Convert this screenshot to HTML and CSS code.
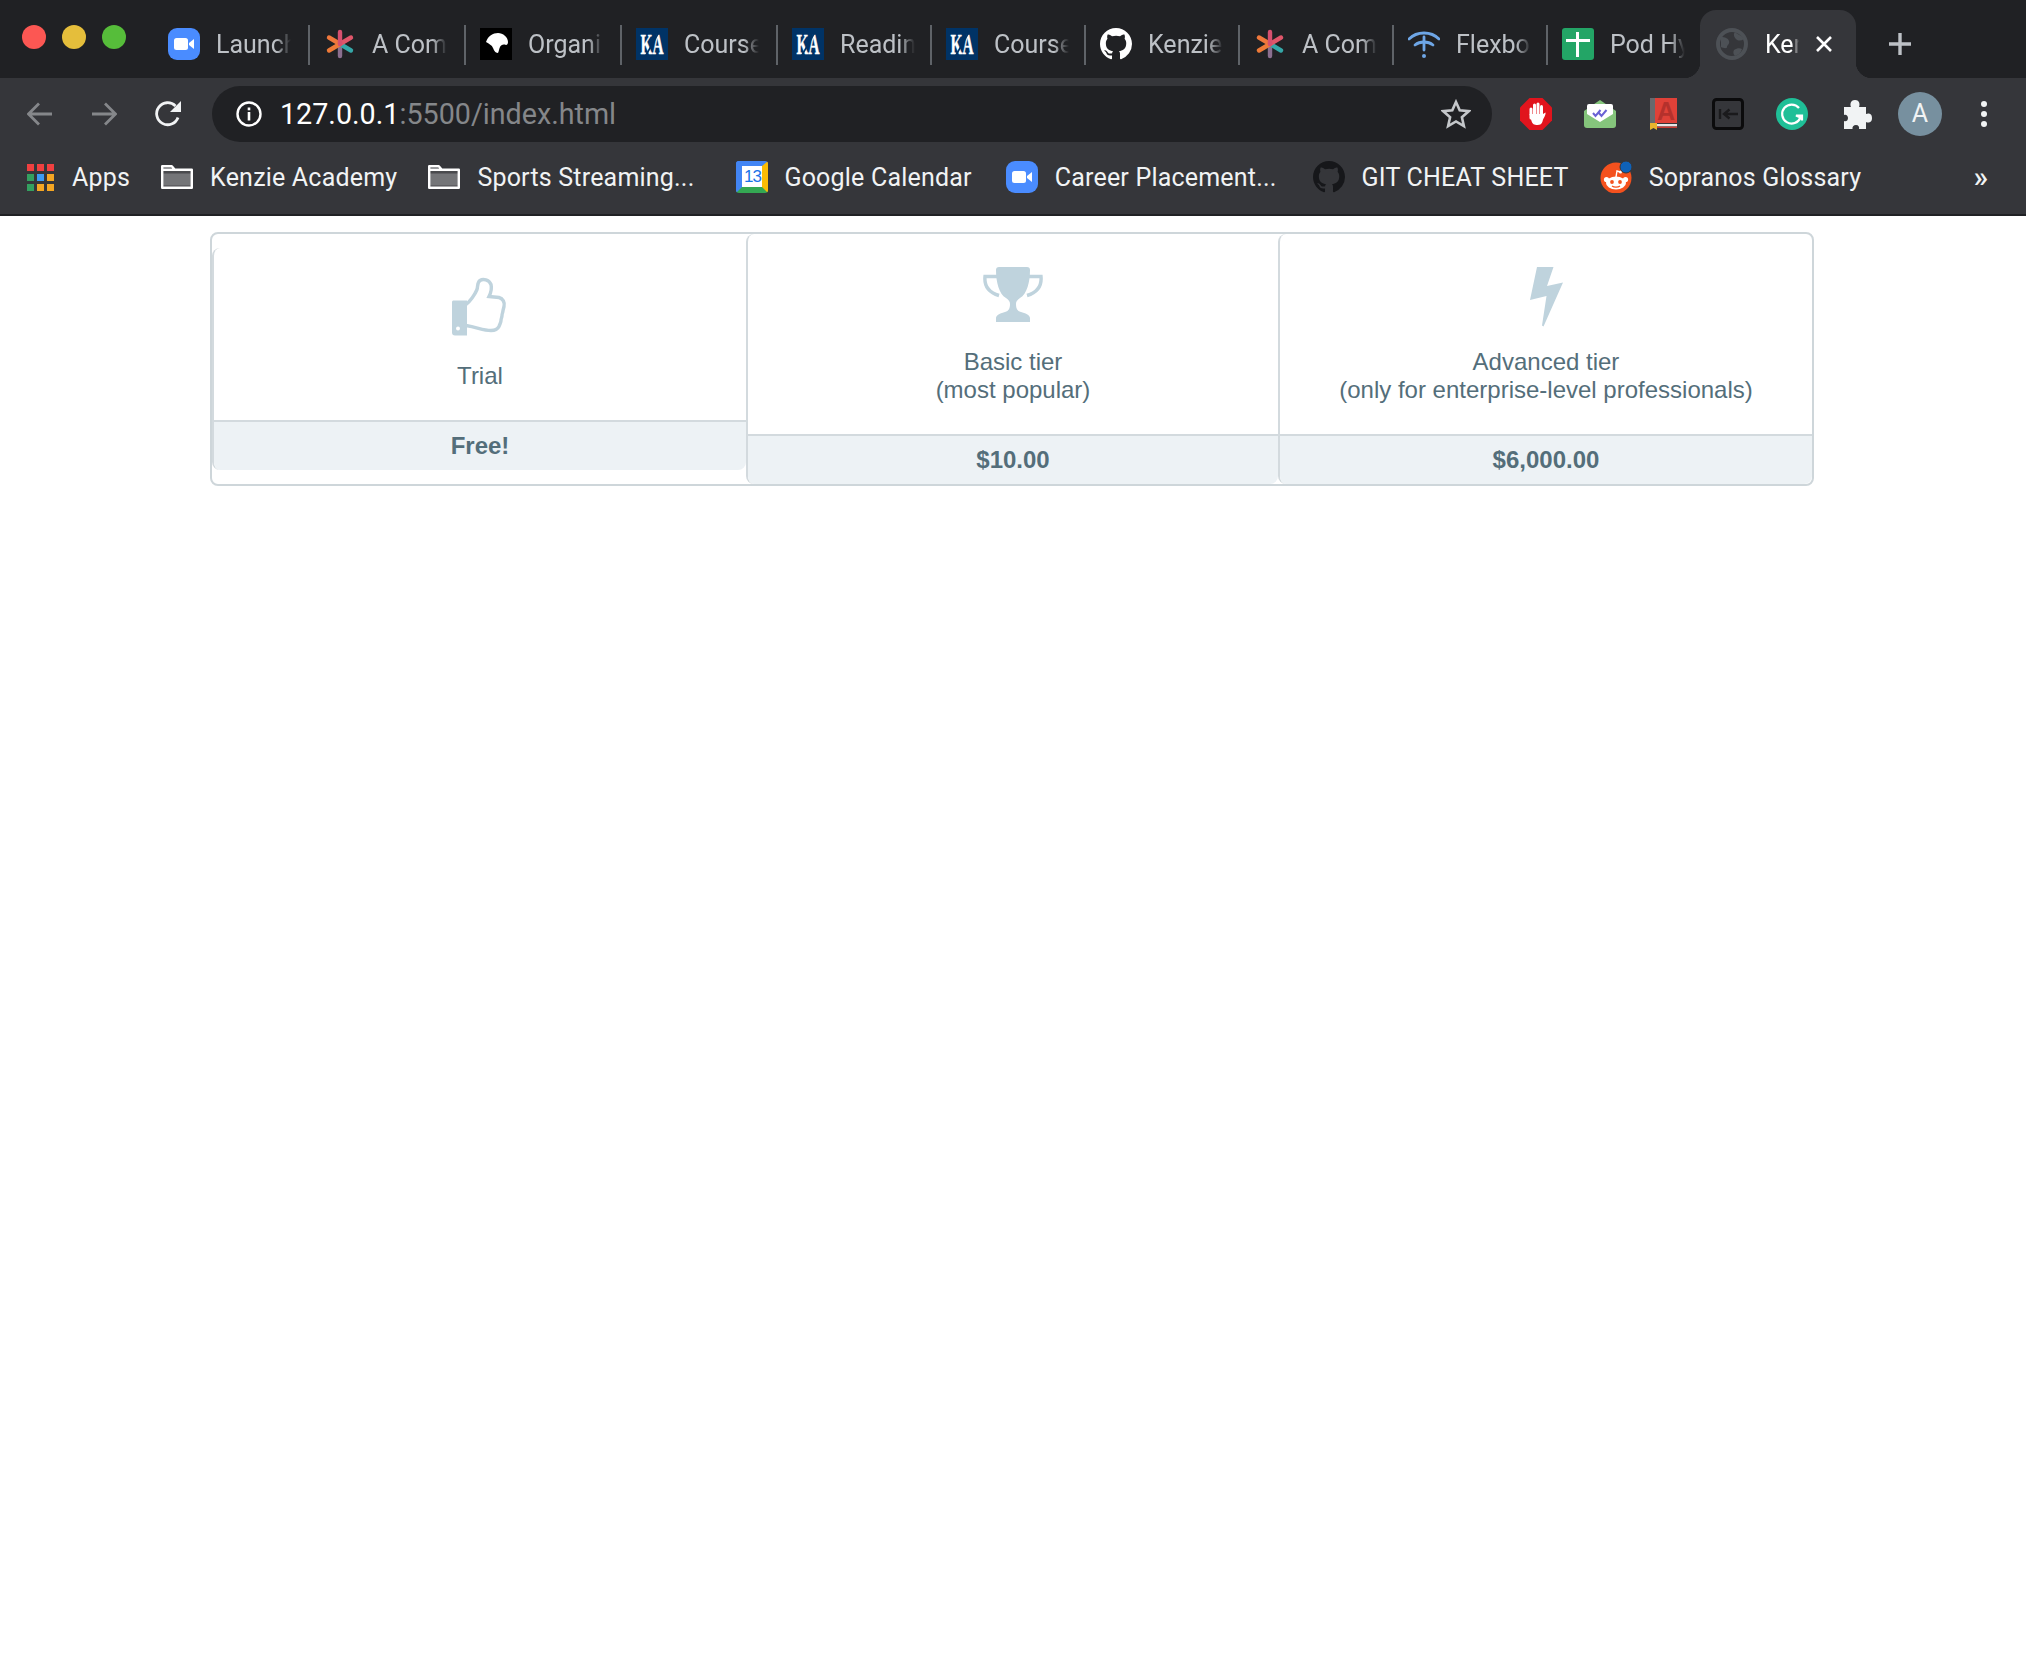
FILE: index.html
```html
<!DOCTYPE html>
<html lang="en">
<head>
    <meta charset="UTF-8">
    <title>Kenzie</title>
    <link rel="stylesheet" href="styles.css">
</head>
<body>
    <svg class="defs" width="0" height="0">
        <symbol id="octocat" viewBox="0 0 16 16">
            <path d="M8 0C3.58 0 0 3.58 0 8c0 3.54 2.29 6.53 5.47 7.59.4.07.55-.17.55-.38 0-.19-.01-.82-.01-1.49-2.01.37-2.53-.49-2.69-.94-.09-.23-.48-.94-.82-1.13-.28-.15-.68-.52-.01-.53.63-.01 1.08.58 1.23.82.72 1.21 1.87.87 2.33.66.07-.52.28-.87.51-1.07-1.78-.2-3.64-.89-3.64-3.95 0-.87.31-1.59.82-2.15-.08-.2-.36-1.02.08-2.12 0 0 .67-.21 2.2.82.64-.18 1.32-.27 2-.27.68 0 1.36.09 2 .27 1.53-1.04 2.2-.82 2.2-.82.44 1.1.16 1.92.08 2.12.51.56.82 1.27.82 2.15 0 3.07-1.87 3.75-3.65 3.95.29.25.54.73.54 1.48 0 1.07-.01 1.93-.01 2.2 0 .21.15.46.55.38A8.013 8.013 0 0016 8c0-4.42-3.58-8-8-8z"/>
        </symbol>
        <symbol id="zoom-icon" viewBox="0 0 32 32">
            <rect width="32" height="32" rx="9" fill="#4a8cff"/>
            <rect x="6" y="10" width="14" height="12" rx="2.5" fill="#fff"/>
            <path d="M21 15l5-4v10l-5-4z" fill="#fff"/>
        </symbol>
        <symbol id="star-icon" viewBox="0 0 32 32">
            <g stroke-width="4.400" stroke-linecap="round">
                <path d="M16 16v12" stroke="#8b6f8f"/>
                <path d="M16 16l11 6.500" stroke="#35a7a8"/>
                <path d="M16 16L5 22.500" stroke="#ee7a38"/>
                <path d="M16 16L5 9.500" stroke="#f0783c"/>
                <path d="M16 16l11-6.500" stroke="#e0566a"/>
                <path d="M16 16V4" stroke="#d6506f"/>
            </g>
        </symbol>
        <symbol id="folder-icon" viewBox="0 0 32 24">
            <rect x="2" y="6" width="28" height="16" fill="#4a4b4e"/>
            <rect x="2" y="8.500" width="28" height="12" fill="#747578"/>
            <path d="M1.200 22.800V1.200h9.600l3 3.600h17v18zM1.200 4.800h12.600" fill="none" stroke="#fff" stroke-width="2.400" stroke-linejoin="round"/>
        </symbol>
        <symbol id="ka-logo" viewBox="0 0 32 32">
            <rect width="32" height="32" fill="#003366"/>
            <text class="ka-text" x="16" y="26" textLength="23" lengthAdjust="spacingAndGlyphs">KA</text>
            <path d="M23 4L9 29" stroke="#003366" stroke-width="1.600"/>
        </symbol>
    </svg>

    <div class="tabstrip">
        <div class="lights">
            <span class="light light-red"></span>
            <span class="light light-yellow"></span>
            <span class="light light-green"></span>
        </div>
        <div class="tab">
            <svg class="favicon"><use href="#zoom-icon"/></svg>
            <span class="tab-title">Launch</span>
        </div>
        <div class="tab">
            <svg class="favicon"><use href="#star-icon"/></svg>
            <span class="tab-title">A Com</span>
        </div>
        <div class="tab">
            <svg class="favicon" viewBox="0 0 32 32">
                <rect width="32" height="32" fill="#000"/>
                <path d="M6 14C8 8 13 5 18 5c5 0 10 4 10 9 0 2-1 3-2 3-3-1-5 0-6 2-1 2-1 4-2 6-3 0-4-3-5-5-1-3-4-4-7-6z" fill="#fff"/>
            </svg>
            <span class="tab-title">Organi</span>
        </div>
        <div class="tab">
            <svg class="favicon"><use href="#ka-logo"/></svg>
            <span class="tab-title">Course</span>
        </div>
        <div class="tab">
            <svg class="favicon"><use href="#ka-logo"/></svg>
            <span class="tab-title">Readin</span>
        </div>
        <div class="tab">
            <svg class="favicon"><use href="#ka-logo"/></svg>
            <span class="tab-title">Course</span>
        </div>
        <div class="tab">
            <svg class="favicon octocat-light"><use href="#octocat"/></svg>
            <span class="tab-title">Kenzie</span>
        </div>
        <div class="tab">
            <svg class="favicon"><use href="#star-icon"/></svg>
            <span class="tab-title">A Com</span>
        </div>
        <div class="tab">
            <svg class="favicon" viewBox="0 0 32 32" fill="none" stroke="#6ea6e6" stroke-width="2.800" stroke-linecap="round">
                <path d="M1 11c4-4 9-6 15-6s11 2 15 6"/>
                <path d="M7 17c2.500-2 5.500-3 9-3s6.500 1 9 3"/>
                <path d="M16 9v13"/>
                <circle cx="16" cy="28" r="2" fill="#6ea6e6" stroke="none"/>
            </svg>
            <span class="tab-title">Flexbo</span>
        </div>
        <div class="tab">
            <svg class="favicon" viewBox="0 0 32 32">
                <rect width="32" height="32" rx="3" fill="#23a566"/>
                <path d="M4 11h24v3H4zM14 4h3v25h-3z" fill="#fff"/>
            </svg>
            <span class="tab-title">Pod Hy</span>
        </div>
        <div class="tab tab-active">
            <svg class="favicon" viewBox="0 0 32 32">
                <circle cx="16" cy="16" r="14" fill="none" stroke="#4d5156" stroke-width="4"/>
                <path d="M5 9c4 0 7 1 8 4s-2 4-2 6-4 1-6 0zM19 4c3 3 7 3 9 7-3 2-6 2-8 0s-3-5-1-7zM18 22c3-2 6-2 8-1-1 4-4 6-7 7-2-2-2-4-1-6z" fill="#4d5156"/>
            </svg>
            <span class="tab-title">Ken</span>
            <svg class="tab-close" viewBox="0 0 16 16"><path d="M1 1l14 14M15 1L1 15"/></svg>
        </div>
        <svg class="new-tab" viewBox="0 0 24 24"><path d="M12 1v22M1 12h22"/></svg>
    </div>

    <div class="toolbar">
        <div class="nav-btn">
            <svg viewBox="0 0 26 26" class="nav-icon nav-dim"><path d="M25 13H2M12 2.500L1.500 13 12 23.500"/></svg>
        </div>
        <div class="nav-btn">
            <svg viewBox="0 0 26 26" class="nav-icon nav-dim"><path d="M1 13h23M14 2.500L24.500 13 14 23.500"/></svg>
        </div>
        <div class="nav-btn">
            <svg viewBox="0 0 28 28" class="nav-icon nav-reload">
                <path d="M24 17.500A11 11 0 1 1 21.500 6"/>
                <path class="nav-fill" d="M27 1v11H16z"/>
            </svg>
        </div>
        <div class="urlbar">
            <svg class="info-icon" viewBox="0 0 26 26">
                <circle cx="13" cy="13" r="11.500" fill="none" stroke="#fff" stroke-width="2.400"/>
                <rect x="11.700" y="11" width="2.600" height="8.500" fill="#fff"/>
                <rect x="11.700" y="6.500" width="2.600" height="2.800" fill="#fff"/>
            </svg>
            <span class="url"><span class="url-host">127.0.0.1</span>:5500/index.html</span>
            <svg class="bookmark-star" viewBox="0 0 30 30"><path d="M15 3l3.700 8.300 9 .9-6.800 6 2 8.800L15 22.400 7.100 27l2-8.800-6.800-6 9-.9z"/></svg>
        </div>
        <div class="extensions">
            <svg class="ext" viewBox="0 0 32 32">
                <path d="M9.500 0h13L32 9.500v13L22.500 32h-13L0 22.500v-13z" fill="#e1141d"/>
                <g fill="none" stroke="#fff" stroke-width="3" stroke-linecap="round">
                    <path d="M11 11v9"/>
                    <path d="M14.500 7v10"/>
                    <path d="M18 6v11"/>
                    <path d="M21.500 8.500v10"/>
                </g>
                <path d="M9.500 16h13.500l2.500-1.500c.5 3-2 5-3 9-.5 2.500-2.500 3.500-5 3.500-3.500 0-5-1-6-4z" fill="#fff"/>
            </svg>
            <svg class="ext" viewBox="0 0 32 32">
                <path d="M16 2L0 13v14a3 3 0 0 0 3 3h26a3 3 0 0 0 3-3V13z" fill="#85c57c"/>
                <path d="M5 6h22a2 2 0 0 1 2 2v8l-13 8-13-8V8a2 2 0 0 1 2-2z" fill="#fff"/>
                <path d="M9 15l2.500 3 5-6M15 15l2.500 3 5-6" fill="none" stroke="#6a62d4" stroke-width="2"/>
            </svg>
            <svg class="ext" viewBox="0 0 32 32">
                <rect x="2" width="5" height="28" fill="#68696d"/>
                <rect x="7" width="22" height="25" fill="#df4138"/>
                <text class="book-letter" x="18" y="22">A</text>
                <rect x="9" y="26" width="20" height="2.500" fill="#e6e6e6"/>
                <rect x="9" y="28.500" width="20" height="1.500" fill="#c63a34"/>
                <path d="M2 25h7v7l-3.500-2L2 32z" fill="#e8b32e"/>
            </svg>
            <svg class="ext" viewBox="0 0 32 32">
                <rect x="1.500" y="1.500" width="29" height="29" rx="3" fill="none" stroke="#0b0b0c" stroke-width="3"/>
                <path d="M8 11v10" stroke="#1a1a1c" stroke-width="2.400"/>
                <path d="M26 16H13M17.500 11.500L12 16l5.500 4.500" fill="none" stroke="#1a1a1c" stroke-width="2.400"/>
            </svg>
            <svg class="ext" viewBox="0 0 32 32">
                <circle cx="16" cy="16" r="16" fill="#1fbf97"/>
                <path d="M23 10a9.500 9.500 0 1 0 1.500 9.500L20 17.500h6v5" fill="none" stroke="#fff" stroke-width="2.200"/>
            </svg>
            <svg class="ext" viewBox="0 0 32 32">
                <path d="M4 9h7c-1-2-1-7 4-7s5 5 4 7h7v7c2-1 6-1 6 4s-4 5-6 4v7H19c.5-2-.5-4-3-4s-4 2-3.500 4H4v-8c2 1 4-.5 4-3s-2-4-4-3z" fill="#f1f3f4"/>
            </svg>
        </div>
        <div class="avatar">A</div>
        <div class="menu-dots"><span></span><span></span><span></span></div>
    </div>

    <div class="bookmarks">
        <div class="bookmark">
            <div class="apps-grid">
                <span class="dot-red"></span><span class="dot-red"></span><span class="dot-red"></span>
                <span class="dot-green"></span><span class="dot-blue"></span><span class="dot-orange"></span>
                <span class="dot-green"></span><span class="dot-orange"></span><span class="dot-orange"></span>
            </div>
            <span class="bookmark-label">Apps</span>
        </div>
        <div class="bookmark">
            <svg class="bm-folder"><use href="#folder-icon"/></svg>
            <span class="bookmark-label">Kenzie Academy</span>
        </div>
        <div class="bookmark bookmark-sports">
            <svg class="bm-folder"><use href="#folder-icon"/></svg>
            <span class="bookmark-label">Sports Streaming...</span>
        </div>
        <div class="bookmark bookmark-calendar">
            <div class="calendar"><span class="calendar-day">13</span></div>
            <span class="bookmark-label">Google Calendar</span>
        </div>
        <div class="bookmark bookmark-career">
            <svg class="bm-icon"><use href="#zoom-icon"/></svg>
            <span class="bookmark-label">Career Placement...</span>
        </div>
        <div class="bookmark">
            <svg class="bm-icon octocat-dark"><use href="#octocat"/></svg>
            <span class="bookmark-label">GIT CHEAT SHEET</span>
        </div>
        <div class="bookmark">
            <svg class="bm-icon" viewBox="0 0 32 32">
                <circle cx="16" cy="17" r="15.500" fill="#f4511e"/>
                <ellipse cx="16" cy="22" rx="10" ry="6.500" fill="#fff"/>
                <circle cx="6.500" cy="18.500" r="2.600" fill="#fff"/>
                <circle cx="25.500" cy="18.500" r="2.600" fill="#fff"/>
                <path d="M16 16l1-6 3 1" fill="none" stroke="#fff" stroke-width="1.400"/>
                <circle cx="20.500" cy="11" r="1.500" fill="#fff"/>
                <circle cx="12" cy="21" r="1.900" fill="#f4511e"/>
                <circle cx="20" cy="21" r="1.900" fill="#f4511e"/>
                <path d="M12 25c2 1.500 6 1.500 8 0" fill="none" stroke="#f4511e" stroke-width="1.200"/>
                <circle cx="26" cy="6" r="6" fill="#0f62b8" stroke="#35363a"/>
            </svg>
            <span class="bookmark-label">Sopranos Glossary</span>
        </div>
        <span class="more-bookmarks">»</span>
    </div>

    <main class="pricing">
        <section class="tier tier-trial">
            <div class="tier-body">
                <svg class="tier-icon" viewBox="0 -0.500 60 60">
                    <path d="M3 22h14v35H5a3 3 0 0 1-3-3V24a2 2 0 0 1 1-2z"/>
                    <circle class="icon-hole" cx="8" cy="50" r="2"/>
                    <path class="thumb-line" d="M16 26c4-3 9-10 11-15 1-3 0-7 3-9 3-2 9-1 11 4 1 4 0 8-2 12l10 1c4 1 6 5 5 9l-1 4c0 2-1 3-1 5s-1 3-1 5-1 3-2 6c-1 2-3 4-8 4-8 0-13-3-25-5"/>
                </svg>
                <div class="tier-name">Trial</div>
            </div>
            <div class="tier-price">Free!</div>
        </section>
        <section class="tier">
            <div class="tier-body">
                <svg class="tier-icon" viewBox="0 0 60 60">
                    <path d="M16 3h28a3 3 0 0 1 3 3c0 12-3 24-10 28-3 2-4 4-4 6 0 4 1 7 5 8 4 1 9 3 9 6v4H13v-4c0-3 5-5 9-6 4-1 5-4 5-8 0-2-1-4-4-6-7-4-10-16-10-28a3 3 0 0 1 3-3z"/>
                    <path class="handle-line" d="M14 12.500H2c-1 10 4 16 14 19M46 12.500h12c1 10-4 16-14 19"/>
                </svg>
                <div class="tier-name">Basic tier<br>(most popular)</div>
            </div>
            <div class="tier-price">$10.00</div>
        </section>
        <section class="tier">
            <div class="tier-body">
                <svg class="tier-icon" viewBox="0 0 60 60">
                    <path d="M21 3h16.500L31 22l16-3.500-19.500 44-1.500-1 4.500-29.500L14 36z"/>
                </svg>
                <div class="tier-name">Advanced tier<br>(only for enterprise-level professionals)</div>
            </div>
            <div class="tier-price">$6,000.00</div>
        </section>
    </main>
</body>
</html>
```

FILE: styles.css
```css
:root {
    --chrome-dark: #202124;
    --chrome-mid: #35363a;
    --tier-text: #546e7a;
    --tier-icon: #bfd3dd;
    --tier-line: #d3dade;
}
body {
    margin: 0;
    background-color: #ffffff;
    font-family: "Liberation Sans", Arial, sans-serif;
}
.defs {
    position: absolute;
}

/* tab strip */
.tabstrip {
    display: flex;
    align-items: flex-start;
    height: 78px;
    background-color: var(--chrome-dark);
}
.lights {
    display: flex;
    gap: 16px;
    width: 154px;
    padding: 25px 0 0 22px;
    box-sizing: border-box;
    flex: none;
}
.light {
    width: 24px;
    height: 24px;
    border-radius: 50%;
}
.light-red { background-color: #fc5753; }
.light-yellow { background-color: #e5be3b; }
.light-green { background-color: #56bd3a; }
.tab {
    display: flex;
    align-items: center;
    gap: 16px;
    flex: none;
    width: 154px;
    height: 40px;
    margin-top: 25px;
    padding: 0 0 2px 14px;
    box-sizing: border-box;
    border-right: 2px solid #5f6368;
}
.tab:nth-child(-n+5) {
    width: 156px;
}
.favicon {
    flex: none;
    width: 32px;
    height: 32px;
}
.ka-text {
    fill: #ffffff;
    stroke: #ffffff;
    stroke-width: 0.4;
    font-family: "Liberation Serif", serif;
    font-size: 30px;
    font-weight: bold;
    text-anchor: middle;
}
.tab-title {
    width: 75px;
    overflow: hidden;
    white-space: nowrap;
    font-family: Roboto, "Liberation Sans", sans-serif;
    font-size: 25px;
    color: #bdc1c6;
    -webkit-mask-image: linear-gradient(to right, #000 80%, transparent 100%);
    mask-image: linear-gradient(to right, #000 80%, transparent 100%);
}
.tab-active {
    position: relative;
    gap: 17px;
    width: 156px;
    height: 68px;
    margin: 10px 0 0 -2px;
    padding: 0 0 0 16px;
    border: none;
    border-radius: 16px 16px 0 0;
    background-color: var(--chrome-mid);
}
.tab-active::before,
.tab-active::after {
    content: "";
    position: absolute;
    bottom: 0;
    width: 16px;
    height: 16px;
}
.tab-active::before {
    left: -16px;
    background: radial-gradient(circle at 0 0, var(--chrome-dark) 16px, var(--chrome-mid) 16.5px);
}
.tab-active::after {
    right: -16px;
    background: radial-gradient(circle at 100% 0, var(--chrome-dark) 16px, var(--chrome-mid) 16.5px);
}
.tab-active .tab-title {
    width: 34px;
    color: #ffffff;
}
.tab-close {
    flex: none;
    width: 16px;
    height: 16px;
    fill: none;
    stroke: #ffffff;
    stroke-width: 2.6;
}
.new-tab {
    flex: none;
    width: 24px;
    height: 24px;
    margin: 32px 0 0 32px;
    fill: none;
    stroke: #bdc1c6;
    stroke-width: 3.4;
}
.octocat-light { fill: #ffffff; }
.octocat-dark { fill: #16171a; }

/* toolbar */
.toolbar {
    display: flex;
    align-items: center;
    height: 64px;
    padding: 8px 0 0 20px;
    box-sizing: border-box;
    background-color: var(--chrome-mid);
}
.nav-btn {
    display: flex;
    justify-content: center;
    flex: none;
    width: 40px;
    margin-right: 24px;
}
.nav-icon {
    width: 26px;
    height: 26px;
    fill: none;
    stroke-width: 2.8;
}
.nav-dim { stroke: #85878a; }
.nav-reload {
    width: 28px;
    height: 28px;
    stroke: #f1f3f4;
}
.nav-fill {
    fill: #f1f3f4;
    stroke: none;
}
.urlbar {
    display: flex;
    align-items: center;
    flex: none;
    width: 1280px;
    height: 56px;
    padding: 0 21px 0 24px;
    box-sizing: border-box;
    border-radius: 28px;
    background-color: var(--chrome-dark);
}
.info-icon {
    flex: none;
    width: 26px;
    height: 26px;
    margin-right: 18px;
}
.url {
    flex: 1;
    font-family: Roboto, "Liberation Sans", sans-serif;
    font-size: 28.7px;
    color: #85878a;
}
.url-host {
    color: #ffffff;
}
.bookmark-star {
    flex: none;
    width: 30px;
    height: 30px;
    fill: none;
    stroke: #c4c7ca;
    stroke-width: 2.6;
}
.extensions {
    display: flex;
    gap: 32px;
    margin-left: 28px;
}
.ext {
    width: 32px;
    height: 32px;
}
.book-letter {
    fill: #b5312c;
    font-family: "Liberation Sans", sans-serif;
    font-size: 25px;
    font-weight: bold;
    text-anchor: middle;
}
.avatar {
    flex: none;
    width: 44px;
    height: 44px;
    margin-left: 26px;
    border-radius: 50%;
    background-color: #77909f;
    color: #f1f3f4;
    font-family: Roboto, "Liberation Sans", sans-serif;
    font-size: 25px;
    line-height: 44px;
    text-align: center;
}
.menu-dots {
    display: flex;
    flex-direction: column;
    gap: 4px;
    margin-left: 39px;
}
.menu-dots span {
    width: 6px;
    height: 6px;
    border-radius: 50%;
    background-color: #f1f3f4;
}

/* bookmarks bar */
.bookmarks {
    display: flex;
    align-items: center;
    gap: 31px;
    height: 74px;
    padding: 0 0 2px 27px;
    box-sizing: border-box;
    background-color: var(--chrome-mid);
    border-bottom: 2px solid var(--chrome-dark);
}
.bookmark {
    display: flex;
    align-items: center;
    gap: 17px;
    flex: none;
}
.bookmark-sports {
    margin-right: 11px;
}
.bookmark-calendar {
    gap: 16px;
    margin-right: 3px;
}
.bookmark-career {
    margin-right: 5px;
}
.bookmark-label {
    font-family: Roboto, "Liberation Sans", sans-serif;
    font-size: 25px;
    letter-spacing: 0.2px;
    color: #f1f3f4;
    white-space: nowrap;
}
.apps-grid {
    display: grid;
    grid-template-columns: repeat(3, 7px);
    gap: 3px;
    margin-right: 1px;
}
.apps-grid span {
    height: 7px;
}
.dot-red { background-color: #f04040; }
.dot-green { background-color: #34a060; }
.dot-blue { background-color: #3b9bf5; }
.dot-orange { background-color: #f5a623; }
.bm-folder {
    width: 32px;
    height: 24px;
}
.bm-icon {
    width: 32px;
    height: 32px;
}
.calendar {
    display: flex;
    align-items: center;
    justify-content: center;
    width: 32px;
    height: 32px;
    border-radius: 3px;
    box-sizing: border-box;
    background-color: #ffffff;
    border-style: solid;
    border-width: 5px 6px 6px 6px;
    border-color: #4285f4 #fbbc04 #34a853 #4285f4;
}
.calendar-day {
    font-family: "Liberation Sans", sans-serif;
    font-size: 17px;
    letter-spacing: -1px;
    color: #1a73e8;
}
.more-bookmarks {
    margin: 0 38px 0 auto;
    font-family: Roboto, "Liberation Sans", sans-serif;
    font-size: 30px;
    font-weight: 500;
    line-height: 30px;
    color: #f1f3f4;
}

/* pricing card */
.pricing {
    display: grid;
    grid-template-columns: 534px 532px 534px;
    margin: 16px 212px 0 210px;
    border: 2px solid #ced6da;
    border-radius: 8px;
    color: var(--tier-text);
    font-size: 24px;
    line-height: 28px;
    text-align: center;
}
.tier {
    display: flex;
    flex-direction: column;
    box-sizing: border-box;
    border-left: 2px solid var(--tier-line);
    border-radius: 8px;
    overflow: hidden;
}
.tier-trial {
    align-self: center;
}
.tier-body {
    flex: 1;
    padding: 30px 0;
}
.tier-icon {
    display: block;
    width: 60px;
    height: 60px;
    margin: 0 auto 24px;
    overflow: visible;
    fill: var(--tier-icon);
}
.icon-hole {
    fill: #ffffff;
}
.thumb-line,
.handle-line {
    fill: none;
    stroke: var(--tier-icon);
    stroke-width: 3.4;
}
.tier-price {
    padding: 10px 0;
    border-top: 2px solid var(--tier-line);
    background-color: #edf2f5;
    font-weight: bold;
}
```
